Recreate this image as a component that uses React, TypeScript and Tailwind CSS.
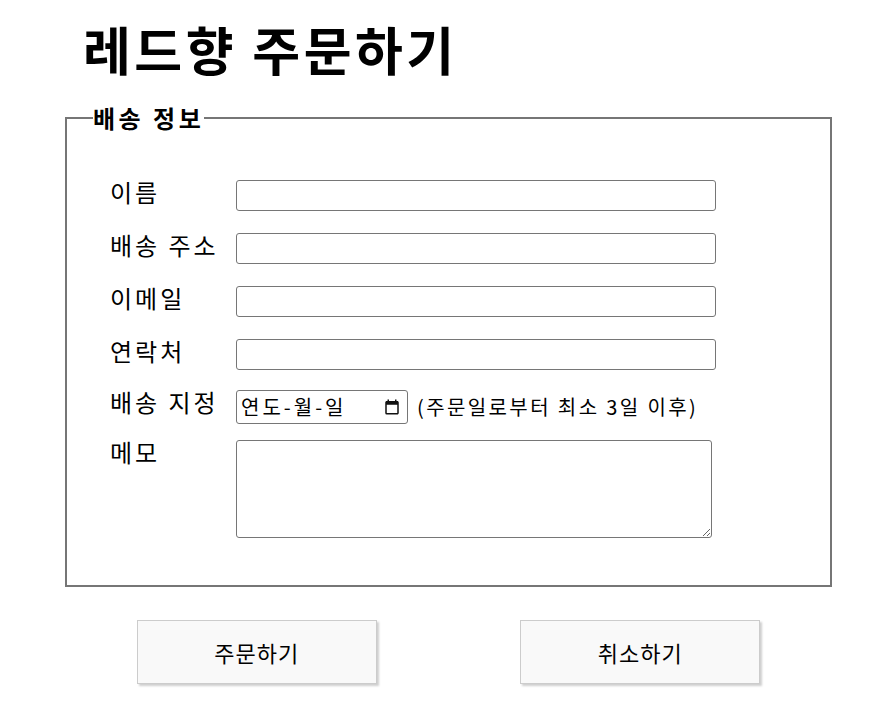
import { useState } from 'react';

const font = { fontFamily: '"Malgun Gothic", "Noto Sans CJK KR", sans-serif' };

function CalendarIcon() {
  return (
    <svg width="18" height="18" viewBox="0 0 24 24" className="text-[#111]">
      <path
        fill="currentColor"
        d="M19 4h-1V2h-2v2H8V2H6v2H5c-1.11 0-2 .9-2 2v14a2 2 0 0 0 2 2h14c1.1 0 2-.9 2-2V6c0-1.1-.9-2-2-2zm0 16H5V9h14v11z"
      />
    </svg>
  );
}

function Row({ label, children, className = '' }: { label: string; children: React.ReactNode; className?: string }) {
  return (
    <div className={`flex items-start ${className}`}>
      <label className="w-[126px] shrink-0 text-[24px] tracking-[3px] leading-[26px] -mt-[1px] whitespace-nowrap">
        {label}
      </label>
      {children}
    </div>
  );
}

export default function App() {
  const [name, setName] = useState('');
  const [address, setAddress] = useState('');
  const [email, setEmail] = useState('');
  const [phone, setPhone] = useState('');
  const [memo, setMemo] = useState('');

  const inputCls =
    'w-[480px] h-[31px] border border-[#767676] rounded-[3px] px-2 text-base outline-none bg-white';

  return (
    <div className="min-h-screen bg-white text-black" style={font}>
      <div className="ml-[65px] w-[767px] pt-[10px]">
        {/* 제목 */}
        <h1 className="pl-[18px] text-[52px] tracking-[3.5px] font-bold leading-[78px]">레드향 주문하기</h1>

        {/* 배송 정보 */}
        <fieldset className="mt-[17px] border-2 border-[#767676] pl-[26px] pr-4 pb-[47px]">
          <legend className="text-[24px] tracking-[3.5px] font-bold leading-[26px]">배송 정보</legend>

          <div className="ml-[17px] mt-[49px] flex flex-col">
            <Row label="이름">
              <input className={inputCls} value={name} onChange={(e) => setName(e.target.value)} />
            </Row>
            <Row label="배송 주소" className="mt-[22px]">
              <input className={inputCls} value={address} onChange={(e) => setAddress(e.target.value)} />
            </Row>
            <Row label="이메일" className="mt-[22px]">
              <input className={inputCls} value={email} onChange={(e) => setEmail(e.target.value)} />
            </Row>
            <Row label="연락처" className="mt-[22px]">
              <input className={inputCls} value={phone} onChange={(e) => setPhone(e.target.value)} />
            </Row>
            <Row label="배송 지정" className="mt-[20px]">
              <div className="flex items-center gap-[9px]">
                <div className="w-[172px] h-[34px] border border-[#767676] rounded-[3px] flex items-center justify-between pl-[4px] pr-[6px] text-[20px]">
                  <span className="tracking-[3px]">연도-월-일</span>
                  <CalendarIcon />
                </div>
                <span className="text-[20px] tracking-[2.4px] whitespace-nowrap">(주문일로부터 최소 3일 이후)</span>
              </div>
            </Row>
            <Row label="메모" className="mt-[16px]">
              <textarea
                className="w-[476px] h-[98px] border border-[#767676] rounded-[3px] p-1 text-base outline-none"
                value={memo}
                onChange={(e) => setMemo(e.target.value)}
              />
            </Row>
          </div>
        </fieldset>

        {/* 버튼 */}
        <div className="mt-[33px] flex justify-around">
          <button className="w-[240px] h-[64px] bg-[#f9f9f9] border border-[#cccccc] shadow-[2px_2px_2px_#cfcfcf] text-[22px] tracking-[1px]">
            주문하기
          </button>
          <button className="w-[240px] h-[64px] bg-[#f9f9f9] border border-[#cccccc] shadow-[2px_2px_2px_#cfcfcf] text-[22px] tracking-[1px]">
            취소하기
          </button>
        </div>
      </div>
    </div>
  );
}
